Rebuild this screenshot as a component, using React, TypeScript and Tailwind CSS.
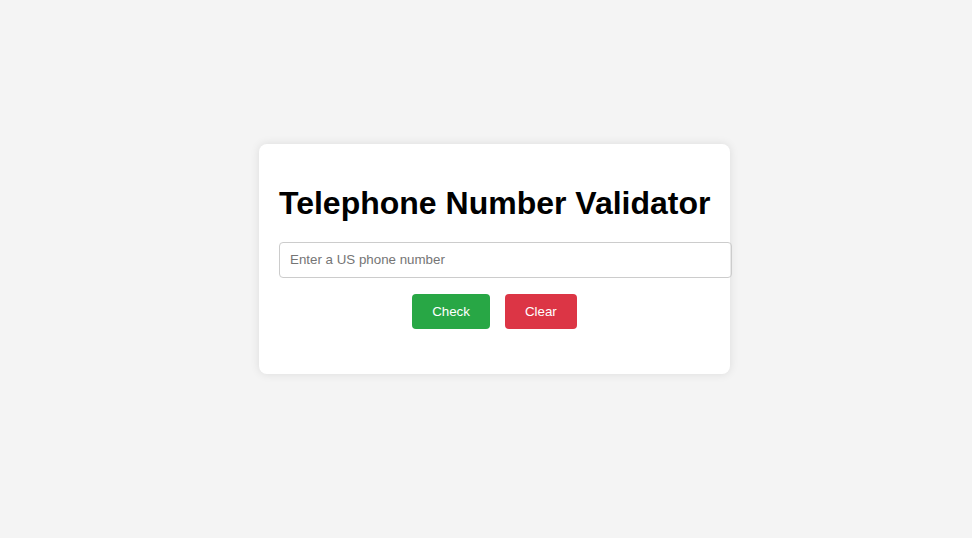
import React from "react";

export default function App() {
  return (
    <div
      className="min-h-screen bg-[#f4f4f4] flex items-center justify-center pb-[20px] pl-[17px]"
      style={{ fontFamily: '"Liberation Sans", Arial, sans-serif' }}
    >
      <div className="w-[471px] bg-white rounded-[8px] shadow-[0_0_10px_rgba(0,0,0,0.1)] px-[20px] pt-[20px] pb-[45px] text-center">
        <h1 className="text-[32px] font-bold leading-[36px] mt-[21px] mb-[21px] text-black whitespace-nowrap">
          Telephone Number Validator
        </h1>
        <input
          type="text"
          placeholder="Enter a US phone number"
          className="box-content block w-full h-[16px] px-[10px] py-[9px] border border-[#ccc] rounded-[4px] text-[13.333px] text-black placeholder:text-[#757575] outline-none"
        />
        <div className="flex justify-center gap-[15px] mt-[16px]">
          <button className="bg-[#28a745] text-white text-[13.333px] leading-[15px] px-[20px] py-[10px] rounded-[4px]">
            Check
          </button>
          <button className="bg-[#dc3545] text-white text-[13.333px] leading-[15px] px-[20px] py-[10px] rounded-[4px]">
            Clear
          </button>
        </div>
      </div>
    </div>
  );
}
